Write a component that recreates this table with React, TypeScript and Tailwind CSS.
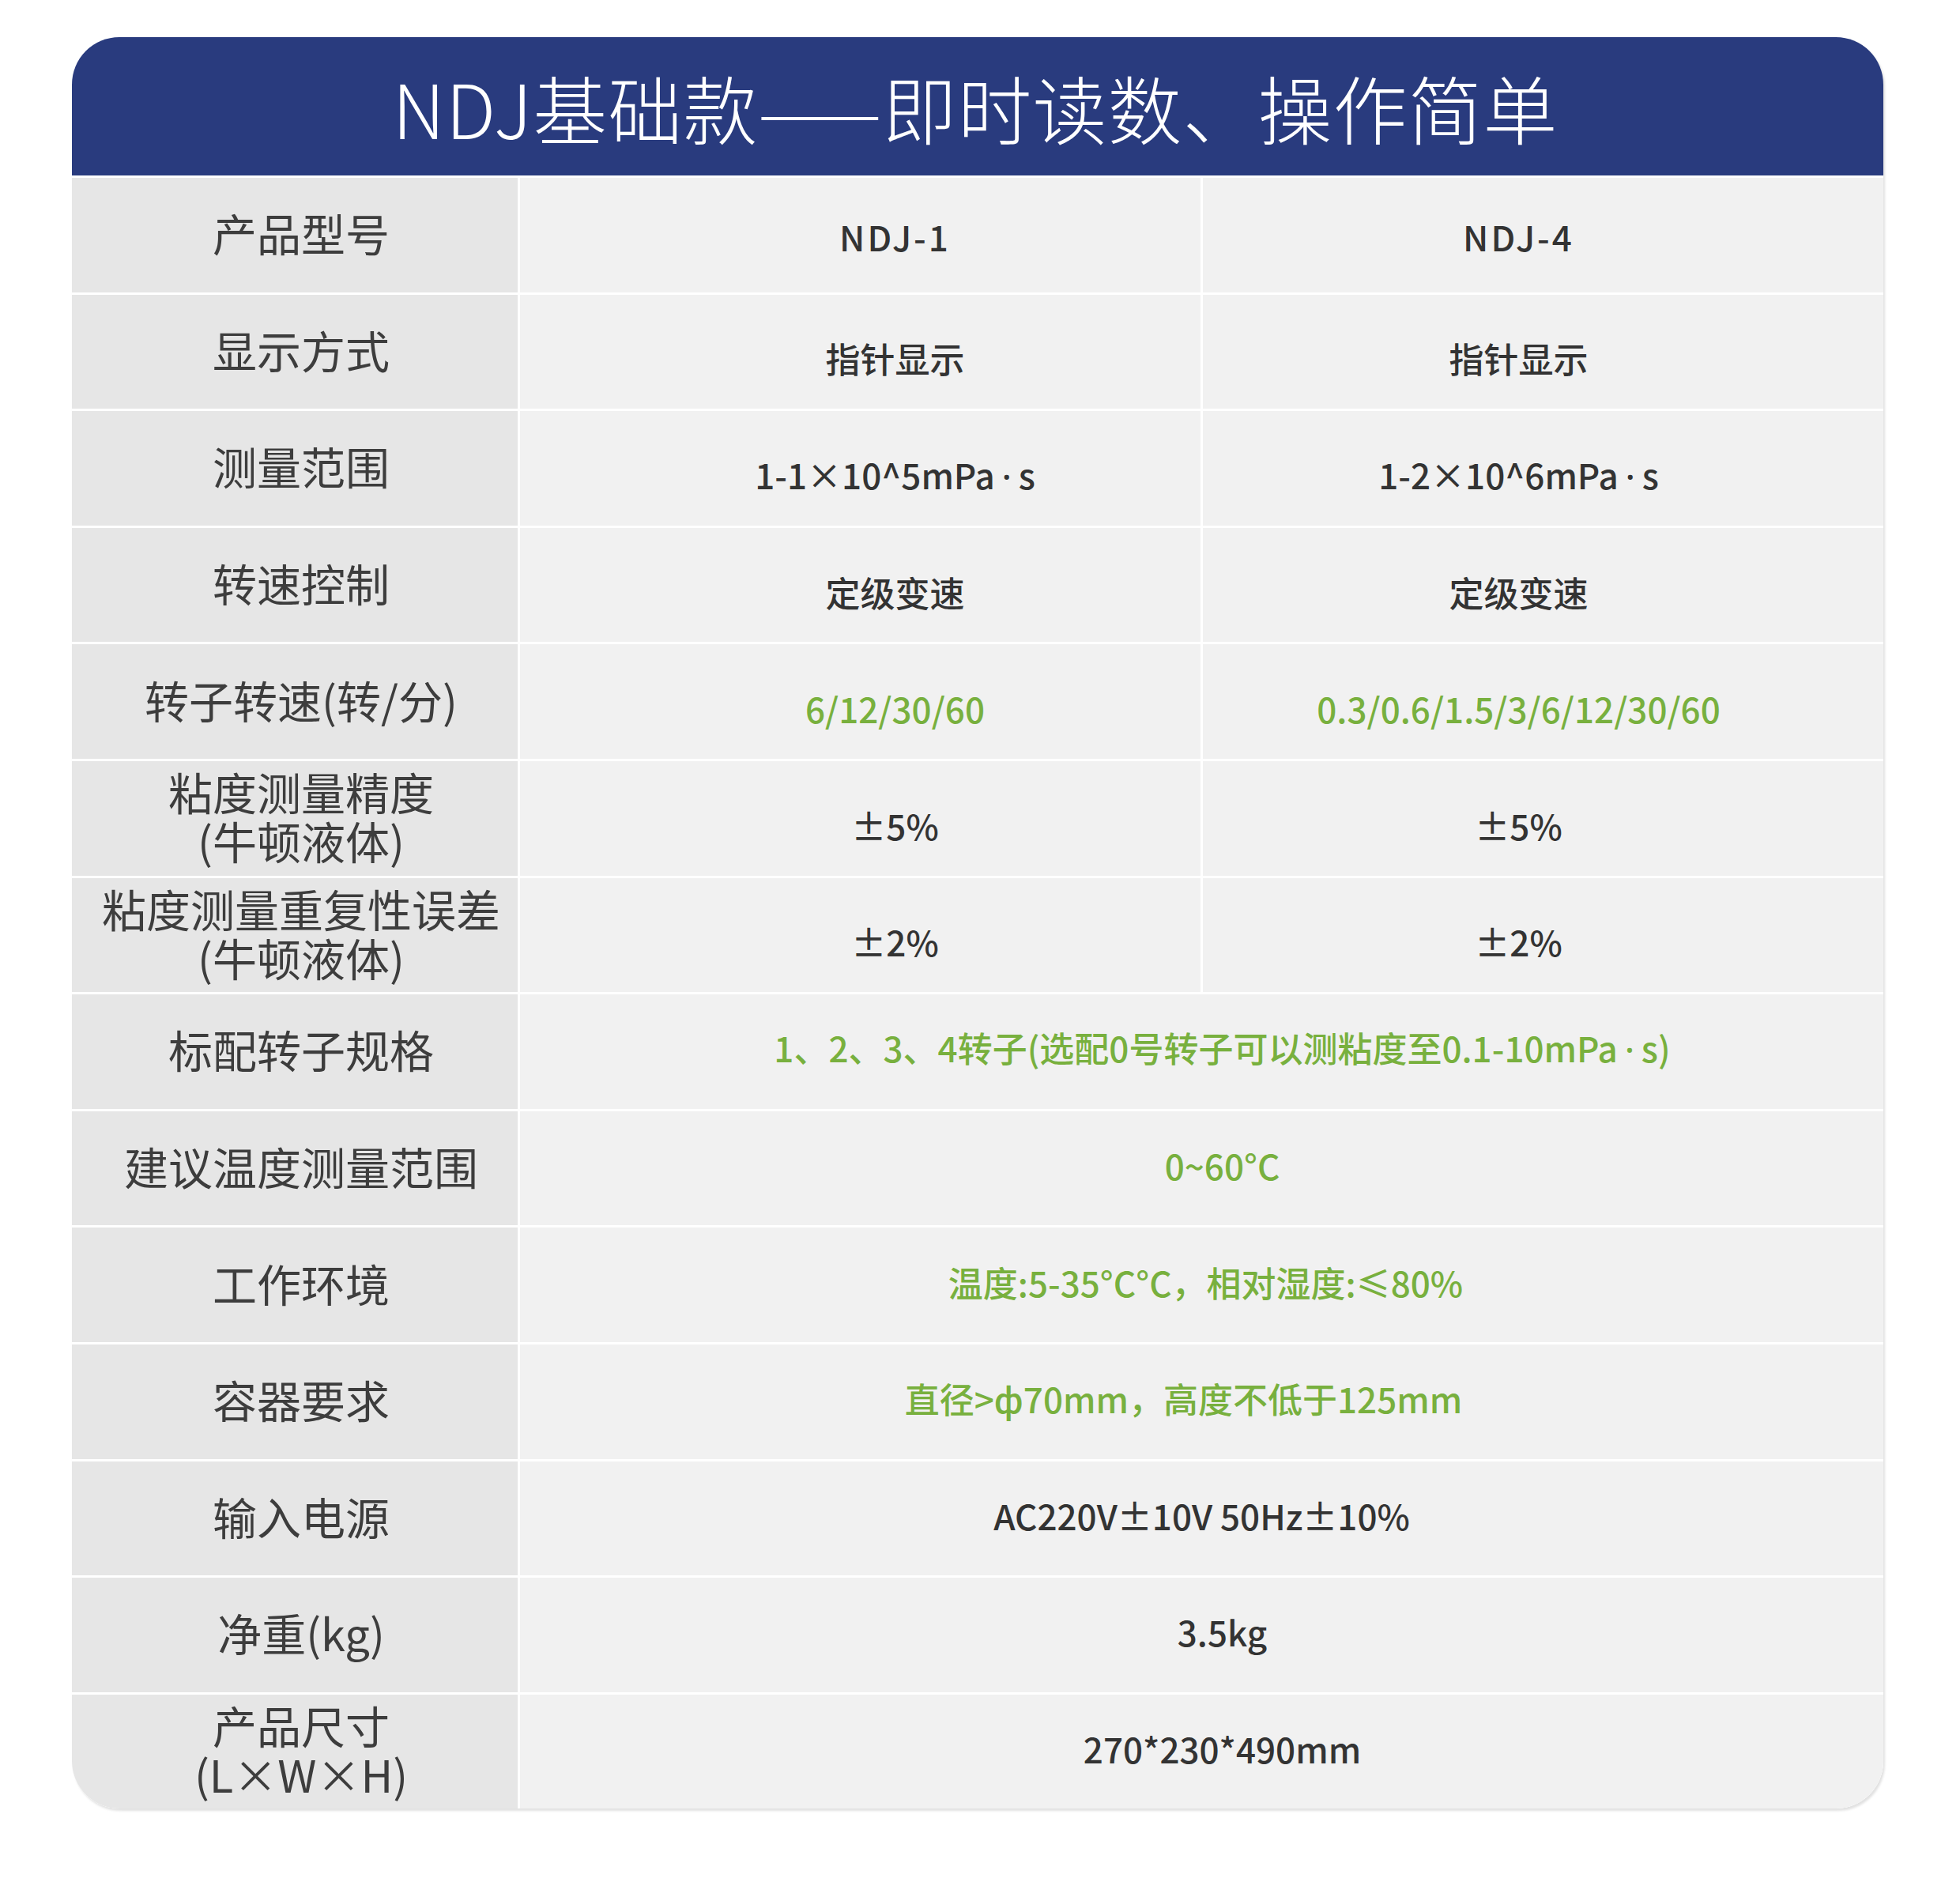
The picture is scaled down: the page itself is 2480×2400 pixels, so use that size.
import React from "react";

const FONT = "font-['Noto_Sans_CJK_SC','Noto_Sans',sans-serif]";

const Dot = () => <span className="font-['Noto_Sans',sans-serif] px-[9px]">·</span>;

type Row = {
  label: React.ReactNode;
  two?: [React.ReactNode, React.ReactNode];
  one?: React.ReactNode;
  green?: boolean;
  shift?: string;
};

const rows: Row[] = [
  { label: "产品型号", two: ["NDJ-1", "NDJ-4"] },
  { label: "显示方式", two: ["指针显示", "指针显示"] },
  { label: "测量范围", two: [<>1-1×10^5mPa<Dot />s</>, <>1-2×10^6mPa<Dot />s</>] },
  { label: "转速控制", two: ["定级变速", "定级变速"] },
  { label: "转子转速(转/分)", two: ["6/12/30/60", "0.3/0.6/1.5/3/6/12/30/60"], green: true },
  { label: <>粘度测量精度<br />(牛顿液体)</>, two: ["±5%", "±5%"] },
  { label: <>粘度测量重复性误差<br />(牛顿液体)</>, two: ["±2%", "±2%"] },
  { label: "标配转子规格", one: <>1、2、3、4转子(选配0号转子可以测粘度至0.1-10mPa<Dot />s)</>, green: true, shift: "pl-[52px]" },
  { label: "建议温度测量范围", one: "0~60°C", green: true, shift: "pl-[52px]" },
  { label: "工作环境", one: "温度:5-35°C°C，相对湿度:≤80%", green: true, shift: "pl-[10px]" },
  { label: "容器要求", one: "直径>ф70mm，高度不低于125mm", green: true, shift: "pr-[46px]" },
  { label: "输入电源", one: "AC220V±10V 50Hz±10%", shift: "" },
  { label: "净重(kg)", one: "3.5kg", shift: "pl-[52px]" },
  { label: <>产品尺寸<br />(L×W×H)</>, one: "270*230*490mm", shift: "pl-[52px]" },
];

export default function App() {
  return (
    <div className={`w-[2480px] h-[2400px] bg-white pt-[47px] pl-[91px] ${FONT}`}>
      <div className="w-[2292px] rounded-[60px] overflow-hidden shadow-[2px_3px_3px_rgba(0,0,0,0.12)] bg-white">
        <div className="h-[175px] bg-[#293b7e] flex items-center justify-center pr-[6px]">
          <h1 className="text-white text-[94px] leading-none font-light tracking-[1px]">
            NDJ基础款——即时读数、操作简单
          </h1>
        </div>
        <div className="flex flex-col gap-[3px] pt-[3px] bg-white">
          {rows.map((r, i) => {
            const color = r.green ? "text-[#78b03e]" : "text-[#333333]";
            const pt = i === 0 ? "pt-[4px] tracking-[3px]" : r.one ? "pb-[8px]" : "pt-[17px]";
            return (
              <div key={i} className="grid grid-cols-[564px_1fr_1fr] gap-[3px] h-[144.6px]">
                <div className="bg-[#e6e6e6] flex items-center justify-center text-center text-[56px] leading-[62px] text-[#3d3d3d] pl-[16px] pb-[6px]">
                  <div>{r.label}</div>
                </div>
                {r.two ? (
                  <>
                    <div className={`bg-[#f1f1f1] flex items-center justify-center pl-[88px] ${pt} text-[44px] leading-none font-medium ${color}`}>
                      <span>{r.two[0]}</span>
                    </div>
                    <div className={`bg-[#f1f1f1] flex items-center justify-center pr-[62px] ${pt} text-[44px] leading-none font-medium ${color}`}>
                      <span>{r.two[1]}</span>
                    </div>
                  </>
                ) : (
                  <div className={`col-span-2 bg-[#f1f1f1] flex items-center justify-center ${r.shift} ${pt} text-[44px] leading-none font-medium ${color}`}>
                    <span>{r.one}</span>
                  </div>
                )}
              </div>
            );
          })}
        </div>
      </div>
    </div>
  );
}
